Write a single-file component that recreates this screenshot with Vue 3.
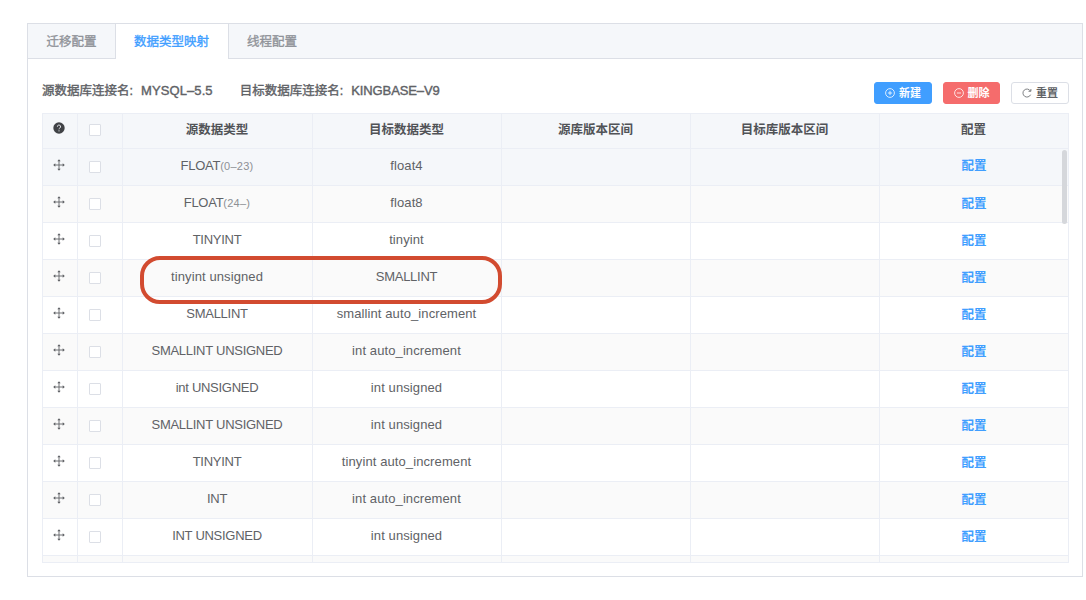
<script setup>
const tabs = ['迁移配置', '数据类型映射', '线程配置']
const heads = ['源数据类型', '目标数据类型', '源库版本区间', '目标库版本区间', '配置']
const rows = [
  { source: 'FLOAT', range: '(0–23)', target: 'float4' },
  { source: 'FLOAT', range: '(24–)', target: 'float8' },
  { source: 'TINYINT', target: 'tinyint' },
  { source: 'tinyint unsigned', target: 'SMALLINT', marked: true },
  { source: 'SMALLINT', target: 'smallint auto_increment' },
  { source: 'SMALLINT UNSIGNED', target: 'int auto_increment' },
  { source: 'int UNSIGNED', target: 'int unsigned' },
  { source: 'SMALLINT UNSIGNED', target: 'int unsigned' },
  { source: 'TINYINT', target: 'tinyint auto_increment' },
  { source: 'INT', target: 'int auto_increment' },
  { source: 'INT UNSIGNED', target: 'int unsigned' },
]
const caseOf = (s) => (/[A-Z]/.test(s) ? 'upper' : 'lower')
</script>

<template>
  <main class="panel">
    <nav class="tabs">
      <div v-for="(t, i) in tabs" :key="t" class="tab" :class="{ active: i === 1 }">{{ t }}</div>
    </nav>
    <section class="toolbar">
      <div class="conn"><span>源数据库连接名:</span><b>MYSQL–5.5</b></div>
      <div class="conn second"><span>目标数据库连接名:</span><b>KINGBASE–V9</b></div>
      <div class="buttons">
        <button class="btn primary">
          <svg viewBox="0 0 10 10"><circle cx="5" cy="5" r="4.4" /><path d="M5 2.9v4.2M2.9 5h4.2" /></svg><span>新建</span>
        </button>
        <button class="btn danger">
          <svg viewBox="0 0 10 10"><circle cx="5" cy="5" r="4.4" /><path d="M2.9 5h4.2" /></svg><span>删除</span>
        </button>
        <button class="btn plain">
          <svg viewBox="0 0 10 10"><path d="M8.4 3A4 4 0 1 0 8.6 6.7M8.9 1v2.3H6.5" /></svg><span>重置</span>
        </button>
      </div>
    </section>
    <section class="table">
      <div class="row head">
        <div class="cell icon">
          <svg class="help" viewBox="0 0 12 12"><circle cx="6" cy="6" r="5.7" fill="#404246" /><path d="M4.4 4.7a1.6 1.6 0 1 1 2.4 1.3Q6 6.5 6 7.3M6 8.3v1.1" fill="none" stroke="#e6e8ec" stroke-width="1" /></svg>
        </div>
        <div class="cell check"><i class="box"></i></div>
        <div v-for="h in heads" :key="h" class="cell text">{{ h }}</div>
      </div>
      <div class="body">
        <div v-for="(r, i) in rows" :key="i" class="row" :class="{ striped: i % 2 === 1, hover: i === 0 }">
          <div class="cell icon">
            <svg class="move" viewBox="0 0 12 12"><path d="M6 1v10M1 6h10" /><path class="tips" d="M6 .2 7.7 2.3H4.3ZM6 11.8 7.7 9.7H4.3ZM.2 6 2.3 4.3V7.7ZM11.8 6 9.7 4.3V7.7Z" /></svg>
          </div>
          <div class="cell check"><i class="box"></i></div>
          <div class="cell text"><span :class="caseOf(r.source)">{{ r.source }}</span><small v-if="r.range">{{ r.range }}</small></div>
          <div class="cell text"><span :class="caseOf(r.target)">{{ r.target }}</span></div>
          <div class="cell"></div>
          <div class="cell"></div>
          <div class="cell link">配置</div>
          <div v-if="r.marked" class="mark"></div>
        </div>
        <div class="row striped"><div v-for="n in 7" :key="n" class="cell"></div></div>
        <div class="scrollbar"></div>
      </div>
    </section>
  </main>
</template>

<style>
body { background: #fff; }
</style>

<style scoped>
* { box-sizing: border-box; }
.panel {
  width: 1056px; height: 554px; margin: 23px 0 0 27px;
  border: 1px solid #dcdfe6;
  font-family: "Liberation Sans", "Noto Sans CJK SC", sans-serif;
  font-size: 12.5px; color: #606266;
}
.tabs { display: flex; height: 35px; background: #f5f7fa; border-bottom: 1px solid #dcdfe6; }
.tab { height: 35px; line-height: 37px; color: #909399; -webkit-text-stroke: .35px #909399; }
.tab:first-child { width: 87px; padding-left: 18.5px; }
.tab.active { width: 114px; padding: 0 18px; background: #fff; color: #409eff; -webkit-text-stroke: .35px #409eff; border: solid #dcdfe6; border-width: 0 1px; }
.tab:last-child { padding-left: 18px; }
.toolbar { display: flex; height: 54px; padding: 0 13px 0 14px; }
.conn { display: flex; gap: 8px; height: 18px; margin-top: 23px; line-height: 18px; white-space: nowrap; }
.conn b { font-weight: 400; font-size: 13px; letter-spacing: .1px; -webkit-text-stroke: .4px #606266; }
.conn span { -webkit-text-stroke: .4px #606266; }
.conn.second { margin-left: 27px; }
.conn.second b { letter-spacing: -.1px; }
.buttons { display: flex; gap: 11px; margin: 23px 0 0 auto; }
.btn {
  display: flex; align-items: center; justify-content: center; gap: 4px;
  width: 58px; height: 22px; padding: 0; border: 1px solid; border-radius: 3px;
  font: 700 11px "Liberation Sans", "Noto Sans CJK SC", sans-serif; white-space: nowrap;
}
.btn span { padding-bottom: 2px; }
.btn svg { width: 10px; height: 10px; fill: none; stroke: currentColor; stroke-width: .8; }
.primary { background: #409eff; border-color: #409eff; color: #fff; }
.danger { width: 57px; background: #f56c6c; border-color: #f56c6c; color: #fff; }
.plain { background: #fff; border-color: #dcdfe6; color: #606266; }
.table { width: 1027px; height: 450px; margin-left: 14px; border: 1px solid #ebeef5; overflow: hidden; }
.row { position: relative; display: grid; grid-template-columns: 35px 45px 190px 189px 189px 189px 189px; height: 37px; width: 1026px; background: #fff; }
.row.head { height: 35px; background: #f5f7fa; color: #515357; font-weight: 700; }
.row.hover { background: #f5f7fa; }
.row.striped { background: #fafafa; }
.cell { border-right: 1px solid #ebeef5; border-bottom: 1px solid #ebeef5; text-align: center; line-height: 34px; white-space: nowrap; }
.cell.text { padding-right: 1px; }
.row:not(.head) .text { font-size: 13px; line-height: 33px; }
.head .cell { line-height: 32px; }
.body { position: relative; }
.icon svg { display: block; width: 12px; height: 12px; margin: 9.5px 0 0 10.3px; }
.head .icon svg { margin-top: 8px; }
.move { fill: none; stroke: #606266; stroke-width: .9; }
.move .tips { fill: #606266; stroke: none; }
.box { display: block; width: 12px; height: 12px; margin: 12px 0 0 11px; border: 1px solid #dcdfe6; border-radius: 1px; background: #fff; }
.head .box { margin-top: 10px; }
.lower { letter-spacing: .1px; }
.upper { letter-spacing: -.27px; }
small { font-size: 11px; color: #8d9095; letter-spacing: .25px; }
.link { color: #409eff; font-weight: 700; line-height: 36px; }
.hover .link { line-height: 35px; }
.mark { position: absolute; z-index: 2; left: 97px; top: -4px; width: 362px; height: 48px; border: 4px solid #d24b30; border-radius: 20px; }
.scrollbar { position: absolute; right: 1px; top: 1px; width: 5px; height: 74px; border-radius: 3px; background: #d5d7db; }
</style>
